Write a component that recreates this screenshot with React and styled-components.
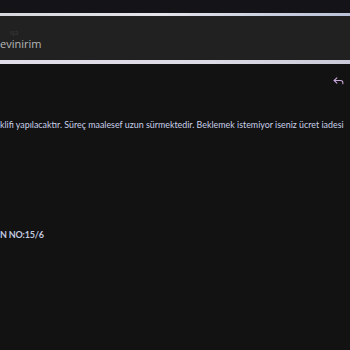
import styled, { createGlobalStyle } from "styled-components";
import { Reply } from "lucide-react";

const Global = createGlobalStyle`
  html, body {
    margin: 0;
    padding: 0;
    background: #121212;
    overflow: hidden;
  }
  body {
    font-family: Lato, "Open Sans", sans-serif;
  }
`;

export default function App() {
  return (
    <Page>
      <Global />
      <TopStrip />
      <Divider $tone="top" />
      <InputPanel>
        <Hint>ışa</Hint>
        <Value>evinirim</Value>
      </InputPanel>
      <Divider $tone="bottom" />
      <Thread>
        <ActionRow>
          <Reply className="icon" size={13} strokeWidth={2} />
        </ActionRow>
        <Message>
          <Line>klifi yapılacaktır. Süreç maalesef uzun sürmektedir. Beklemek istemiyor iseniz ücret iadesi</Line>
          <OrderNo>N NO:15/6</OrderNo>
        </Message>
      </Thread>
    </Page>
  );
}

const Page = styled.div`
  width: 350px;
  height: 350px;
  overflow: hidden;
  display: flex;
  flex-direction: column;
  background: #121212;
`;

const TopStrip = styled.div`
  height: 13px;
  background: #141418;
`;

const Divider = styled.div`
  height: ${(p) => (p.$tone === "top" ? "3px" : "4px")};
  background: ${(p) =>
    p.$tone === "top"
      ? "linear-gradient(90deg, #d6d6de 0%, #e4e4ea 45%, #b9c2d8 100%)"
      : "linear-gradient(90deg, #e2dee9 0%, #dcdae4 60%, #c9c9d8 100%)"};
`;

const InputPanel = styled.div`
  height: 44px;
  background: #212121;
  display: flex;
  flex-direction: column;
  justify-content: flex-end;
  padding-bottom: 9px;
  box-sizing: border-box;
`;

const Hint = styled.div`
  font-size: 7px;
  color: #3a3a3a;
  margin-left: 10px;
  line-height: 9px;
`;

const Value = styled.div`
  font-family: "Open Sans", sans-serif;
  font-size: 11px;
  color: #b8b8b8;
  line-height: 14px;
`;

const Thread = styled.div`
  display: flex;
  flex-direction: column;
`;

const ActionRow = styled.div`
  display: flex;
  justify-content: flex-end;
  padding: 10px 5px 0 0;
  height: 14px;
  .icon {
    color: #c8a6d8;
  }
`;

const Message = styled.div`
  padding-top: 30px;
  display: flex;
  flex-direction: column;
  gap: 96px;
`;

const Line = styled.div`
  white-space: nowrap;
  font-size: 8.9px;
  line-height: 14px;
  color: #c9d1ea;
`;

const OrderNo = styled.div`
  font-weight: 700;
  font-size: 9px;
  letter-spacing: -0.2px;
  line-height: 14px;
  color: #c2c9e0;
`;
